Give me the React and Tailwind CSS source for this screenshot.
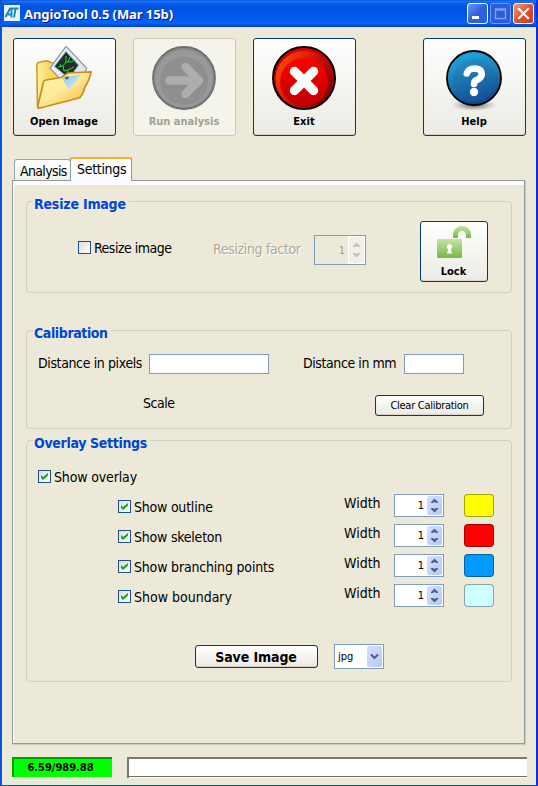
const TAHOMA = "font-['DejaVu_Sans_Condensed','DejaVu_Sans',sans-serif]";

function FolderIcon() {
  return (
    <svg width="60" height="66" viewBox="34 45 60 66" className="block">
      <defs>
        <linearGradient id="fold" x1="0" y1="0" x2="1" y2="1">
          <stop offset="0" stopColor="#fff3b0" />
          <stop offset="0.45" stopColor="#ffec9c" />
          <stop offset="1" stopColor="#f0ae2c" />
        </linearGradient>
        <linearGradient id="back" x1="0" y1="0" x2="1" y2="0">
          <stop offset="0" stopColor="#fff0a0" />
          <stop offset="0.3" stopColor="#fbd768" />
          <stop offset="1" stopColor="#f3bf4b" />
        </linearGradient>
        <linearGradient id="frame" x1="0" y1="0" x2="1" y2="1">
          <stop offset="0" stopColor="#ffffff" />
          <stop offset="1" stopColor="#d4d8e2" />
        </linearGradient>
        <linearGradient id="shine" x1="0" y1="0" x2="1" y2="1">
          <stop offset="0" stopColor="#8fc4ec" />
          <stop offset="1" stopColor="#d9eefb" />
        </linearGradient>
      </defs>
      <path d="M37.500 107 L36.800 65 Q37 62.500 40 62 L47 60.800 L51 62.500 L76 66 L76 96 L38 108Z" fill="url(#back)" stroke="#cc9620" strokeWidth="1.500" />
      <path d="M66 46.500 L86.500 68 L85 75 L70 90 L50 68Z" fill="url(#frame)" stroke="#9a9ca5" strokeWidth="1.300" />
      <path d="M66 51 L79 65 L69 79 L54 66.500Z" fill="#282b2b" stroke="#a9d8f6" strokeWidth="1.200" />
      <path d="M58 67 L63 66 L66 62 L66 56 M63 66 L64 71 L68 70 L67 75 M66 62 L71 62 L75 60 M68 70 L74 67 M70 57 L68 62 M60 64 L61 67" fill="none" stroke="#17e22c" strokeWidth="1" />
      <path d="M43.500 82 Q44 80.500 46 80 L61 77.500 L68 73 L91 72 Q90 79 85 87 Q82 97 79 98 L40 108 Q37.500 108 38 105Z" fill="url(#fold)" stroke="#c78e14" strokeWidth="1.700" />
      <path d="M62 77.500 L81 74.500 L69 90Z" fill="url(#shine)" />
      <path d="M64.500 77 L69.500 76.500 L67 80Z" fill="#4c5a70" />
    </svg>
  );
}

function ArrowIcon() {
  return (
    <svg width="64" height="64" viewBox="0 0 64 64" className="block">
      <circle cx="32" cy="32" r="31" fill="#8c8c8c" stroke="#707070" strokeWidth="1.800" />
      <circle cx="32" cy="32.500" r="28.500" fill="#999999" />
      <circle cx="32" cy="35" r="24" fill="#8f8f8f" />
      <path d="M17.500 34.500 H45 M33.500 21 L47 34.500 L33.500 48" fill="none" stroke="#adadad" strokeWidth="8.500" strokeLinecap="round" strokeLinejoin="round" />
    </svg>
  );
}

function ExitIcon() {
  return (
    <svg width="64" height="64" viewBox="0 0 64 64" className="block">
      <defs>
        <linearGradient id="rim" x1="0" y1="0.200" x2="1" y2="0.800">
          <stop offset="0" stopColor="#ff4b05" />
          <stop offset="0.500" stopColor="#d01005" />
          <stop offset="1" stopColor="#7a0000" />
        </linearGradient>
        <linearGradient id="rtop" x1="0" y1="0" x2="0" y2="1">
          <stop offset="0" stopColor="#e00000" />
          <stop offset="1" stopColor="#7d0000" />
        </linearGradient>
        <linearGradient id="rin" x1="0" y1="0" x2="0" y2="1">
          <stop offset="0" stopColor="#ff0000" />
          <stop offset="1" stopColor="#bd0000" />
        </linearGradient>
      </defs>
      <circle cx="32" cy="32" r="31" fill="url(#rtop)" stroke="#000" strokeWidth="2" />
      <circle cx="32" cy="33.500" r="28.500" fill="url(#rim)" />
      <circle cx="32" cy="36" r="24" fill="url(#rin)" />
      <path d="M22.500 25.500 L41.500 44.500 M41.500 25.500 L22.500 44.500" stroke="#fff" strokeWidth="9.500" strokeLinecap="round" />
    </svg>
  );
}

function HelpIcon() {
  return (
    <svg width="60" height="64" viewBox="0 0 60 64" className="block">
      <defs>
        <radialGradient id="shade">
          <stop offset="0" stopColor="#333" stopOpacity="0.800" />
          <stop offset="1" stopColor="#777" stopOpacity="0" />
        </radialGradient>
        <linearGradient id="bout" x1="0" y1="0" x2="0.300" y2="1">
          <stop offset="0" stopColor="#18b0ea" />
          <stop offset="0.500" stopColor="#1f86bd" />
          <stop offset="1" stopColor="#12498c" />
        </linearGradient>
        <linearGradient id="bin" x1="0" y1="0" x2="0.300" y2="1">
          <stop offset="0" stopColor="#2596c8" />
          <stop offset="1" stopColor="#14559a" />
        </linearGradient>
      </defs>
      <ellipse cx="30" cy="55" rx="23" ry="6" fill="url(#shade)" />
      <circle cx="30" cy="28" r="27" fill="url(#bout)" stroke="#000" strokeWidth="1.800" />
      <circle cx="30" cy="30" r="21.500" fill="url(#bin)" />
      <path d="M22.800 23.500 Q24 18.500 31 18.500 Q37.800 19 37.800 24 Q37.500 28 33 30 Q30 31 30 34" fill="none" stroke="#fff" strokeWidth="6.600" strokeLinecap="round" strokeLinejoin="round" />
      <circle cx="30" cy="42" r="4.200" fill="#fff" />
    </svg>
  );
}

function LockIcon() {
  return (
    <svg width="36" height="34" viewBox="436 225 36 34" className="block">
      <defs>
        <linearGradient id="lk" x1="0" y1="0" x2="0" y2="1">
          <stop offset="0" stopColor="#c5e3a4" />
          <stop offset="1" stopColor="#78b943" />
        </linearGradient>
      </defs>
      <path d="M453 238 V234.500 Q454 226 462 226 Q470 226 471 234.500 V238 H466 V235.500 Q466 231 462 231 Q458 231 458 235.500 V238Z" fill="url(#lk)" />
      <rect x="437" y="239" width="25" height="19" rx="1" fill="url(#lk)" />
      <path d="M447.400 248.500 A2.700 2.700 0 1 1 451.600 248.500 L450.700 249 L452 253.500 H447 L448.300 249Z" fill="#fff" />
    </svg>
  );
}

function LogoIcon() {
  return (
    <svg width="16" height="16" viewBox="0 0 16 16" className="block">
      <rect width="16" height="16" fill="#e9f4fb" />
      <path d="M1.500 12 L6 3.500 H14.500 M4 9.500 H7.500 M7.500 3.500 V12.500 M11.500 4 L10 12.500" fill="none" stroke="#1787c0" strokeWidth="1.900" />
    </svg>
  );
}

function Button({ className = "", children, disabled }) {
  return (
    <div
      className={`rounded-[3px] border flex flex-col items-center ${
        disabled
          ? "border-[#c9c7ba] bg-[#f5f4ea] text-[#a1a192]"
          : "border-[#003c74] bg-linear-to-b from-white via-[#f4f4f0] to-[#ecebe6] text-black shadow-[inset_0_-1px_1px_#d6d0c5]"
      } ${className}`}
    >
      {children}
    </div>
  );
}

function ToolButton({ icon, label, pad, className = "", tracking = "", disabled }) {
  return (
    <Button disabled={disabled} className={`w-[103px] h-[98px] pr-px ${className}`}>
      <div className={`h-[74px] ${pad}`}>{icon}</div>
      <div className={`text-[11px] leading-[18px] font-bold whitespace-nowrap ${tracking}`}>{label}</div>
    </Button>
  );
}

function Group({ title, gap, tracking = "", className = "", children }) {
  return (
    <section className={`relative rounded-[4px] border border-[#d0d0bf] w-[486px] ml-[13px] ${className}`}>
      <h2 className={`absolute left-[6px] top-[-8px] pl-px h-5 bg-[#ece9d8] text-[#0046d5] font-bold text-[14px] leading-5 whitespace-nowrap ${gap} ${tracking}`}>
        {title}
      </h2>
      {children}
    </section>
  );
}

function Check({ on, label, tracking = "", className = "" }) {
  return (
    <div className={`flex items-start h-5 ${className}`}>
      <div className="w-[13px] h-[13px] mt-1 border border-[#1c5180] bg-linear-to-br from-[#dcdcd7] to-white">
        {on && (
          <svg width="11" height="11" viewBox="0 0 11 11" className="block">
            <path d="M2 4 V7 L4 9 L9 4.500 V2 L4 6Z" fill="#21a121" />
          </svg>
        )}
      </div>
      <span className={`ml-[3px] mt-px text-[14px] leading-5 whitespace-nowrap ${tracking}`}>{label}</span>
    </div>
  );
}

function Spinner({ disabled, className = "" }) {
  const arrow = disabled ? "#c3c2b8" : "#4d6185";
  return (
    <div
      className={`flex border border-[#7f9db9] ${disabled ? "bg-[#ece9d8] text-[#a1a192]" : "bg-white text-black"} ${className}`}
    >
      <span className={`flex-1 text-right text-[11px] pr-[3px] ${disabled ? "leading-[29px]" : "leading-[21px]"}`}>1</span>
      <div className={disabled ? "w-[17px] bg-white p-px" : "w-[16px] py-px pr-px"}>
        <div
          className={`h-full rounded-[2px] flex flex-col items-center ${
            disabled ? "bg-[#f0efe8] justify-around py-[3px]" : "bg-linear-to-br from-[#d6e0fd] to-[#b4c8f8] justify-around py-px"
          }`}
        >
          <svg width="9" height="6" viewBox="0 0 9 6"><path d="M1 5 V4 L4.500 0.500 L8 4 V5 H6 L4.500 4 L3 5Z" fill={arrow} /></svg>
          <svg width="9" height="6" viewBox="0 0 9 6"><path d="M1 1 V2 L4.500 5.500 L8 2 V1 H6 L4.500 2 L3 1Z" fill={arrow} /></svg>
        </div>
      </div>
    </div>
  );
}

function OverlayRow({ label, tracking, color }) {
  return (
    <div className="flex h-[30px] items-start pl-[91px]">
      <Check on label={label} tracking={tracking} className="w-[226px] mt-[2px]" />
      <span className="w-[50px] -mt-px text-[14px] leading-5">Width</span>
      <Spinner className="w-[50px] h-[23px]" />
      <div className={`ml-5 w-[30px] h-[23px] rounded-[4px] border border-black/35 ${color}`} />
    </div>
  );
}

function TitleButton({ className, children }) {
  return (
    <div className={`w-[21px] h-[21px] rounded-[3px] border ${className}`}>
      <svg width="19" height="19" viewBox="0 0 19 19" className="block">{children}</svg>
    </div>
  );
}

export default function App() {
  return (
    <div className={`w-[538px] h-[786px] flex flex-col bg-[#ece9d8] border-l-2 border-r-2 border-b border-l-[#0855dd] border-r-[#0831d9] border-b-[#0a48d8] overflow-hidden ${TAHOMA} text-black`}>
      <header className="h-[27px] shrink-0 -mx-[2px] flex items-start bg-[linear-gradient(#0a5be0_0%,#1c72f2_6%,#0a5ae8_14%,#0053e0_30%,#0058ea_60%,#0266fe_85%,#0050d8_94%,#003dc8_100%)] pl-1">
        <div className="mt-[5px]"><LogoIcon /></div>
        <h1 className="ml-1 mt-[4px] flex-1 font-['Noto_Sans',sans-serif] font-bold text-[13px] leading-5 tracking-[-0.08px] text-white whitespace-nowrap [text-shadow:1px_1px_0_#0a1883]">
          AngioTool 0.5 (Mar 15b)
        </h1>
        <div className="flex gap-[2px] mt-[3px] mr-1">
          <TitleButton className="border-white bg-linear-to-br from-[#6d94f0] via-[#2f5fe0] to-[#2a5fe8]">
            <rect x="4" y="12" width="7" height="3" fill="#fff" />
          </TitleButton>
          <TitleButton className="border-[#6f9af0] bg-[#2a5ade]">
            <path d="M4.500 5 H14.500 V14.500 H4.500Z M4.500 6 H14.500" fill="none" stroke="#7f9eee" strokeWidth="1.500" />
          </TitleButton>
          <TitleButton className="border-white bg-linear-to-br from-[#f09a80] via-[#e0512f] to-[#c83c14]">
            <path d="M5 5 L14 14 M14 5 L5 14" stroke="#fff" strokeWidth="2.200" strokeLinecap="square" />
          </TitleButton>
        </div>
      </header>

      <div className="flex pl-[11px] pt-[11px] shrink-0">
        <ToolButton icon={<FolderIcon />} label="Open Image" pad="pt-[6px]" tracking="tracking-[0.1px]" />
        <ToolButton icon={<ArrowIcon />} label="Run analysis" pad="pt-[7px]" className="ml-[17px]" disabled />
        <ToolButton icon={<ExitIcon />} label="Exit" pad="pt-[7px]" className="ml-[17px]" />
        <ToolButton icon={<HelpIcon />} label="Help" pad="pt-[11px]" className="ml-[67px]" />
      </div>

      <nav className="flex items-end h-[24px] mt-[21px] pl-3 shrink-0 text-[14px] leading-5">
        <div className="w-[57px] h-[22px] rounded-t-[3px] border border-b-0 border-[#91a7b4] bg-linear-to-b from-white to-[#f0efe6] pl-[5px] pt-px whitespace-nowrap tracking-[-0.65px]">
          Analysis
        </div>
        <div className="w-[62px] h-[24px] -ml-px rounded-t-[2px] border-x border-[#919b9c] bg-[#fcfcfe] shadow-[inset_0_2px_0_#f7b02c] pl-[6px] pt-[2px] whitespace-nowrap tracking-[-0.3px] relative">
          Settings
        </div>
      </nav>

      <main className="w-[513px] h-[564px] ml-[10px] -mt-px shrink-0 border border-[#919b9c] shadow-[1px_1px_1px_#cfccbe,inset_1px_4px_0_#fcfcfe] flex flex-col">
        <Group title="Resize Image" gap="w-[96px]" tracking="tracking-[-0.2px]" className="h-[92px] mt-5 flex">
          <Check label="Resize image" tracking="tracking-[-0.5px]" className="mt-[35px] ml-[51px] w-[135px]" />
          <span className="mt-[37px] w-[101px] text-[14px] leading-5 text-[#aca899] whitespace-nowrap tracking-[-0.35px] [text-shadow:1px_1px_0_#fff]">
            Resizing factor
          </span>
          <Spinner disabled className="mt-[33px] w-[52px] h-[30px]" />
          <Button className="ml-[54px] mt-[19px] w-[68px] h-[61px] pr-px">
            <div className="h-[42px] pt-[3px]"><LockIcon /></div>
            <div className="text-[11px] leading-4 font-bold">Lock</div>
          </Button>
        </Group>

        <Group title="Calibration" gap="w-[78px]" tracking="tracking-[-0.4px]" className="h-[99px] mt-[37px]">
          <div className="flex h-5 mt-[23px] pl-[11px] text-[14px] leading-5 whitespace-nowrap">
            <span className="w-[111px] -mt-px tracking-[-0.38px]">Distance in pixels</span>
            <div className="w-[120px] border border-[#7f9db9] bg-white" />
            <span className="w-[101px] ml-[34px] -mt-px tracking-[-0.42px]">Distance in mm</span>
            <div className="w-[60px] border border-[#7f9db9] bg-white" />
          </div>
          <div className="flex mt-[21px] pl-[116px]">
            <span className="w-[232px] text-[14px] leading-5 -mt-[2px] tracking-[-0.5px]">Scale</span>
            <Button className="w-[109px] h-[21px] justify-center text-[11px] leading-[19px] whitespace-nowrap tracking-[-0.28px]">Clear Calibration</Button>
          </div>
        </Group>

        <Group title="Overlay Settings" gap="w-[117px]" tracking="tracking-[-0.32px]" className="h-[242px] mt-[11px]">
          <Check on label="Show overlay" tracking="tracking-[-0.15px]" className="mt-[25px] ml-[11px]" />
          <div className="mt-[8px]">
            <OverlayRow label="Show outline" tracking="tracking-[-0.22px]" color="bg-[#ffff00]" />
            <OverlayRow label="Show skeleton" tracking="tracking-[-0.22px]" color="bg-[#ff0000]" />
            <OverlayRow label="Show branching points" tracking="tracking-[-0.18px]" color="bg-[#0099ff]" />
            <OverlayRow label="Show boundary" tracking="tracking-normal" color="bg-[#ccffff]" />
          </div>
          <div className="flex mt-[30px] pl-[168px]">
            <Button className="w-[123px] h-[23px] mt-px pr-px justify-center text-[14px] font-bold leading-[21px] whitespace-nowrap tracking-[-0.1px]">
              <span className="mt-px">Save Image</span>
            </Button>
            <div className="ml-4 w-[50px] h-[25px] border border-[#7f9db9] bg-white flex p-px">
              <span className="flex-1 pl-[2px] text-[11px] leading-[21px]">jpg</span>
              <div className="w-[15px] rounded-[2px] bg-linear-to-br from-[#d6e0fd] to-[#b4c8f8] flex items-center justify-center">
                <svg width="9" height="7" viewBox="0 0 9 7"><path d="M1 1.500 L4.500 5 L8 1.500" fill="none" stroke="#4d6185" strokeWidth="2" /></svg>
              </div>
            </div>
          </div>
        </Group>
      </main>

      <footer className="flex mt-[13px] pl-[10px] shrink-0">
        <div className="w-[100px] h-5 bg-[#00ff00] border-t-2 border-l-2 border-t-[#00a000] border-l-[#00a000] text-[11px] font-bold leading-[18px] text-center pr-[5px]">
          6.59/989.88
        </div>
        <div className="ml-[15px] w-[400px] h-[21px] bg-white border-t-2 border-l-2 border-[#7d7a6c] shadow-[inset_0_-1px_0_#fff,inset_0_-2px_0_#716f64]" />
      </footer>
    </div>
  );
}
